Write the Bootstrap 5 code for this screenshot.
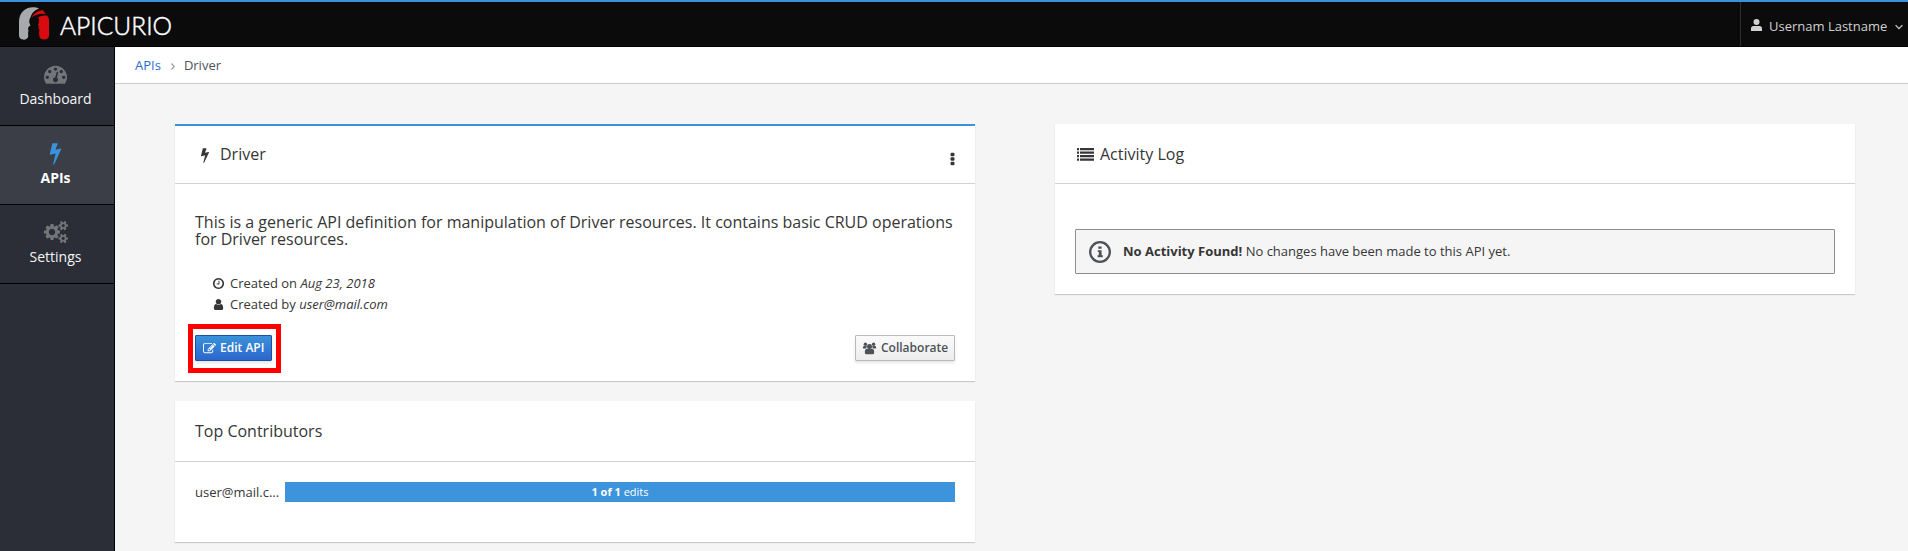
<!DOCTYPE html>
<html lang="en">
<head>
<meta charset="utf-8">
<meta name="viewport" content="width=device-width, initial-scale=1">
<title>Apicurio - Driver</title>
<link rel="stylesheet" href="https://cdn.jsdelivr.net/npm/bootstrap@5.3.0/dist/css/bootstrap.min.css">
<style>
body{font-family:"Open Sans","Liberation Sans",sans-serif;font-size:13px;line-height:1.6667;color:#363636;background:#f5f5f5;height:551px;overflow:hidden}
svg{fill:currentColor;display:block;flex:none}
.topbar{height:47px;border-top:2px solid #3a92db;border-bottom:1px solid #000;background:#0b0b0b}
.brand-logo{margin-left:18px}
.user-menu{width:168px;border-left:1px solid #2e2e2e;color:#d1d1d1;padding:5px 0 0 10px}
.sidebar{width:115px;background:#2b2e37;border-right:1px solid #000;font-size:14px}
.side-item{height:79px;border-bottom:1px solid #000;color:#f5f5f5;padding:14px 3px 0 0;text-decoration:none;line-height:22px}
.side-item svg{color:#72767b;height:26px}
.side-item span{margin-top:1px}
.side-item.active{background:#3b3e47;color:#fff}
.side-item.active span{font-weight:700}
.side-item.active svg{color:#3a92db}
.crumbs{height:37px;background:#fff;border-bottom:1px solid #ccc;padding:2px 0 0 20px;color:#4d5258}
.crumbs a{color:#2b6bce;text-decoration:none}
.content{padding:40px 13px 0 20px}
.content .col-6{padding:0 40px}
.panel{background:#fff;box-shadow:0 1px 1px rgba(3,3,3,.175);margin-bottom:20px}
.panel-head{height:60px;border-bottom:1px solid #d1d1d1;padding:1px 20px 0;font-size:16px}
.accent{border-top:2px solid #3a92db}
.accent .panel-head{height:58px;padding-top:0}
.desc{font-size:16px;line-height:17px;padding-top:30px;height:89px}
.meta{height:21px;padding-left:17px}
.btn-pf{height:26px;border-radius:1px;font-size:12px;font-weight:600;line-height:24px;padding:0 7px;box-shadow:0 2px 3px rgba(3,3,3,.1)}
.btn-edit{color:#fff;border:1px solid #1f4fa5;background:linear-gradient(#3a92db,#2b66cc)}
.btn-collab{color:#4d5258;border:1px solid #bbb;background:linear-gradient(#fafafa,#ededed)}
.highlight{border:5px solid #f00;padding:6px 4px 7px 2px;margin-left:-7px;width:93px;height:49px}
.notice{height:45px;border:1px solid #8b8d8f;border-radius:1px;background:#f5f5f5;padding-left:13px}
.bar{height:20px;background:#3d93dc;color:#fff;font-size:11px;line-height:20px}
</style>
</head>
<body>
<header class="topbar d-flex justify-content-between">
  <svg class="brand-logo" width="160" height="44" viewBox="0 0 160 44" role="img">
    <path fill="#a7a9ac" d="M1 20C1 11 7 5.300 15 5.300c2.500 0 4.500.4 6 1.200-4 1.500-7.500 4.500-8.500 9-1 1-1.500 3-1 5.500l1 2.500c-2.500 1-3 3-2 5l-.5 3 .3 2.500c0 2-2 3.700-4.500 3.700S1 36 1 33.500z"/>
    <path fill="#d90a10" d="M13.500 15.500C16 11 20 8.300 25 8.200l2.800 3.800c-5-.8-10 .2-14.300 3.500z"/>
    <path fill="#d90a10" d="M20 15.300c3-1.500 6-2 9.200-1.800l1.800 3.500v16.500c0 2.500-2 4-4.700 4s-5-1.500-5-4l-.3-3 .5-2.500-1.200-2.500 1-1.500c-1.500-.5-2-1-2-1.500 2.200-2 2.500-5 .7-7.200z"/>
    <circle cx="16.200" cy="20.500" r="4.400" fill="#0b0b0b"/>
    <text x="42" y="32.500" font-family="Lato,sans-serif" font-size="26" font-weight="300" fill="#fff" stroke="#fff" stroke-width=".5" textLength="112" lengthAdjust="spacingAndGlyphs">APICURIO</text>
  </svg>
  <div class="user-menu d-flex align-items-center">
    <svg width="11" height="12" viewBox="0 0 11 12" style="margin-top:-3px"><circle cx="5.500" cy="3" r="3"/><path d="M0 12V9.500Q0 7 2.500 7h6Q11 7 11 9.500V12z"/></svg>
    <span style="margin:0 8px 0 7px">Usernam Lastname</span>
    <svg width="8" height="6" viewBox="0 0 8 6"><path d="M.6 1.200 4 4.600 7.400 1.200" fill="none" stroke="currentColor" stroke-width="1.200"/></svg>
  </div>
</header>
<div class="d-flex" style="height:504px">
  <nav class="sidebar flex-shrink-0">
    <a class="side-item d-flex flex-column align-items-center" href="#">
      <svg width="23" viewBox="0 0 1792 1792"><path d="M384 1152q0-53-37.500-90.500t-90.500-37.500-90.500 37.500-37.500 90.500 37.500 90.500 90.500 37.500 90.500-37.500 37.500-90.500zm192-448q0-53-37.500-90.500t-90.500-37.500-90.500 37.500-37.500 90.500 37.500 90.500 90.500 37.500 90.500-37.500 37.500-90.500zm428 481l101-382q6-26-7.500-48.500t-38.500-29.500-48 6.500-30 39.500l-101 382q-60 5-107 43.500t-63 98.500q-20 77 20 146t117 89 146-20 89-117q16-60-6-117t-72-91zm660-33q0-53-37.500-90.500t-90.500-37.500-90.500 37.500-37.500 90.500 37.500 90.500 90.500 37.500 90.500-37.500 37.500-90.500zm-640-640q0-53-37.500-90.500t-90.500-37.500-90.500 37.500-37.500 90.500 37.500 90.500 90.500 37.500 90.500-37.500 37.500-90.500zm448 192q0-53-37.500-90.500t-90.500-37.500-90.500 37.500-37.500 90.500 37.500 90.500 90.500 37.500 90.500-37.500 37.500-90.500zm320 448q0 261-141 483-19 29-54 29h-1402q-35 0-54-29-141-221-141-483 0-182 71-348t191-286 286-191 348-71 348 71 286 191 191 286 71 348z"/></svg>
      <span>Dashboard</span></a>
    <a class="side-item active d-flex flex-column align-items-center" href="#">
      <svg width="23" viewBox="0 0 1792 1792"><use href="#bolt"/></svg><span>APIs</span></a>
    <a class="side-item d-flex flex-column align-items-center" href="#">
      <svg width="24" viewBox="0 0 1920 1792"><path d="M896 896q0-106-75-181t-181-75-181 75-75 181 75 181 181 75 181-75 75-181zm768 512q0-52-38-90t-90-38-90 38-38 90q0 53 37.500 90.500t90.500 37.500 90.500-37.500 37.500-90.500zm0-1024q0-52-38-90t-90-38-90 38-38 90q0 53 37.500 90.500t90.500 37.500 90.500-37.500 37.500-90.500zm-384 421v185q0 10-7 19.500t-16 10.500l-155 24q-11 35-32 76 34 48 90 115 7 11 7 20 0 12-7 19-23 30-82.500 89.500t-78.500 59.500q-11 0-21-7l-115-90q-37 19-77 31-11 108-23 155-7 24-30 24h-186q-11 0-20-7.500t-10-17.500l-23-153q-34-10-75-31l-118 89q-7 7-20 7-11 0-21-8-144-133-144-160 0-9 7-19 10-14 41-53t47-61q-23-44-35-82l-152-24q-10-1-17-9.500t-7-19.500v-185q0-10 7-19.500t16-10.500l155-24q11-35 32-76-34-48-90-115-7-11-7-20 0-12 7-20 22-30 82-89t79-59q11 0 21 7l115 90q34-18 77-32 11-108 23-154 7-24 30-24h186q11 0 20 7.500t10 17.500l23 153q34 10 75 31l118-89q8-7 20-7 11 0 21 8 144 133 144 160 0 8-7 19-12 16-42 54t-45 60q23 48 34 82l152 23q10 2 17 10.500t7 19.500zm640 533v140q0 16-149 31-12 27-30 52 51 113 51 138 0 4-4 7-122 71-124 71-8 0-46-47t-52-68q-20 2-30 2t-30-2q-14 21-52 68t-46 47q-2 0-124-71-4-3-4-7 0-25 51-138-18-25-30-52-149-15-149-31v-140q0-16 149-31 13-29 30-52-51-113-51-138 0-4 4-7 4-2 35-20t59-34 30-16q8 0 46 46.500t52 67.500q20-2 30-2t30 2q51-71 92-112l6-2q4 0 124 70 4 3 4 7 0 25-51 138 17 23 30 52 149 15 149 31zm0-1024v140q0 16-149 31-12 27-30 52 51 113 51 138 0 4-4 7-122 71-124 71-8 0-46-47t-52-68q-20 2-30 2t-30-2q-14 21-52 68t-46 47q-2 0-124-71-4-3-4-7 0-25 51-138-18-25-30-52-149-15-149-31v-140q0-16 149-31 13-29 30-52-51-113-51-138 0-4 4-7 4-2 35-20t59-34 30-16q8 0 46 46.500t52 67.500q20-2 30-2t30 2q51-71 92-112l6-2q4 0 124 70 4 3 4 7 0 25-51 138 17 23 30 52 149 15 149 31z"/></svg>
      <span>Settings</span></a>
  </nav>
  <main class="flex-grow-1">
    <div class="crumbs d-flex align-items-center">
      <a href="#">APIs</a>
      <svg style="margin:1px 9px 0 10px" width="4" height="7" viewBox="0 0 4 7"><path d="M.5.5l2.700 3-2.700 3" fill="none" stroke="#9c9c9c" stroke-width="1.200"/></svg>
      <span>Driver</span>
    </div>
    <div class="content">
      <div class="row g-0">
        <div class="col-6">
          <section class="panel accent">
            <div class="panel-head d-flex align-items-center justify-content-between">
              <div class="d-flex align-items-center">
                <svg width="16" height="16" viewBox="0 0 1792 1792" style="margin:0 7px 0 2px"><path id="bolt" d="M1333 566q18 20 7 44l-540 1157q-13 25-42 25-4 0-14-2-17-5-25.500-19t-4.500-30l197-808-406 101q-4 1-12 1-18 0-31-11-18-15-13-39l201-825q4-14 16-23t28-9h328q19 0 32 12.500t13 29.500q0 8-5 18l-171 463 396-98q8-2 12-2 19 0 34 15z"/></svg>
                <span>Driver</span>
              </div>
              <svg class="mt-2" width="5" height="14" viewBox="0 0 5 14"><rect x=".5" y=".8" width="4" height="3.400" rx="1.200"/><rect x=".5" y="5.300" width="4" height="3.400" rx="1.200"/><rect x=".5" y="9.800" width="4" height="3.400" rx="1.200"/></svg>
            </div>
            <div style="height:197px;padding:0 20px">
              <p class="desc mb-0">This is a generic API definition for manipulation of Driver resources. It contains basic CRUD operations for Driver resources.</p>
              <div class="meta d-flex align-items-center">
                <svg width="13" height="13" viewBox="0 0 1792 1792"><path d="M1024 544v448q0 14-9 23t-23 9h-320q-14 0-23-9t-9-23v-64q0-14 9-23t23-9h224v-352q0-14 9-23t23-9h64q14 0 23 9t9 23zm416 352q0-148-73-273t-198-198-273-73-273 73-198 198-73 273 73 273 198 198 273 73 273-73 198-198 73-273zm224 0q0 209-103 385.500t-279.500 279.500-385.500 103-385.500-103-279.500-279.500-103-385.500 103-385.500 279.500-279.500 385.500-103 385.500 103 279.500 279.500 103 385.500z"/></svg>
                <span style="margin-left:5px">Created on <em>Aug 23, 2018</em></span>
              </div>
              <div class="meta d-flex align-items-center">
                <svg width="13" height="13" viewBox="0 0 1792 1792"><path d="M1536 1399q0 109-62.500 187t-150.500 78h-854q-88 0-150.500-78t-62.500-187q0-85 8.500-160.500t31.500-152 58.500-131 94-89 134.500-34.500q131 128 313 128t313-128q76 0 134.500 34.500t94 89 58.500 131 31.500 152 8.500 160.500zm-256-887q0 159-112.500 271.500t-271.500 112.500-271.500-112.500-112.500-271.500 112.500-271.500 271.500-112.500 271.500 112.500 112.500 271.500z"/></svg>
                <span style="margin-left:5px">Created by <em>user@mail.com</em></span>
              </div>
              <div class="d-flex justify-content-between" style="margin-top:9px">
                <div class="highlight">
                  <button class="btn btn-pf btn-edit d-flex align-items-center w-100">
                    <svg width="13" height="13" viewBox="0 0 1792 1792"><path d="M888 1184l116-116-152-152-116 116v56h96v96h56zm440-720q-16-16-33 1l-350 350q-17 17-1 33t33-1l350-350q17-17 1-33zm80 594v190q0 119-84.500 203.500t-203.500 84.500h-832q-119 0-203.500-84.500t-84.500-203.500v-832q0-119 84.500-203.500t203.500-84.500h832q63 0 117 25 15 7 18 23 3 17-9 29l-49 49q-14 14-32 8-23-6-45-6h-832q-66 0-113 47t-47 113v832q0 66 47 113t113 47h832q66 0 113-47t47-113v-126q0-13 9-22l64-64q15-15 35-7t20 29zm-96-738l288 288-672 672h-288v-288zm444 132l-92 92-288-288 92-92q28-28 68-28t68 28l152 152q28 28 28 68t-28 68z"/></svg>
                    <span class="ms-1 text-nowrap">Edit API</span>
                  </button>
                </div>
                <button class="btn btn-pf btn-collab d-flex align-items-center" style="margin-top:11px;width:100px">
                  <svg width="13" height="13" viewBox="0 0 13 13"><circle cx="2.400" cy="2.300" r="1.700"/><circle cx="10.600" cy="2.300" r="1.700"/><path d="M0 6.600V5.200q0-1.500 1.300-1.200h2.500L3.300 6.600zM13 6.600V5.200q0-1.500-1.300-1.200H9.200l.5 2.600z"/><circle cx="6.500" cy="4.600" r="2.500"/><path d="M1.900 11V9.500q0-2.700 2.500-2.700h4.200q2.500 0 2.500 2.700V11q0 1.300-1.300 1.300H3.200Q1.900 12.300 1.900 11z"/></svg>
                  <span style="margin-left:5px">Collaborate</span>
                </button>
              </div>
            </div>
          </section>
          <section class="panel">
            <div class="panel-head d-flex align-items-center" style="height:61px">Top Contributors</div>
            <div class="d-flex align-items-center" style="height:80px;padding:0 20px 20px">
              <span style="width:90px;padding-top:1px">user@mail.c...</span>
              <div class="bar flex-grow-1 text-center"><b>1 of 1</b> edits</div>
            </div>
          </section>
        </div>
        <div class="col-6">
          <section class="panel">
            <div class="panel-head d-flex align-items-center" style="padding-top:2px">
              <svg width="17" height="13" viewBox="0 0 17 13" style="margin:0 6px 0 2px"><path d="M0 0h2v2.300H0zM3 0h14v2.300H3zM0 3.500h2v2.300H0zM3 3.500h14v2.300H3zM0 7h2v2.300H0zM3 7h14v2.300H3zM0 10.500h2v2.300H0zM3 10.500h14v2.300H3z"/></svg>
              <span>Activity Log</span>
            </div>
            <div style="height:110px;padding:45px 20px 0">
              <div class="notice d-flex align-items-center">
                <svg width="22" height="22" viewBox="0 0 22 22" color="#4d5258"><circle cx="11" cy="11" r="9.800" fill="none" stroke="currentColor" stroke-width="2.300"/><path d="M9.300 5.500h3.300v2.300H9.300zM8.800 9.300h3.800v5h1.200v1.900H8.600v-1.900h1.200v-3.200h-1z"/></svg>
                <span style="margin-left:12px"><b>No Activity Found!</b> No changes have been made to this API yet.</span>
              </div>
            </div>
          </section>
        </div>
      </div>
    </div>
  </main>
</div>
<script src="https://cdn.jsdelivr.net/npm/bootstrap@5.3.0/dist/js/bootstrap.bundle.min.js"></script>
</body>
</html>
